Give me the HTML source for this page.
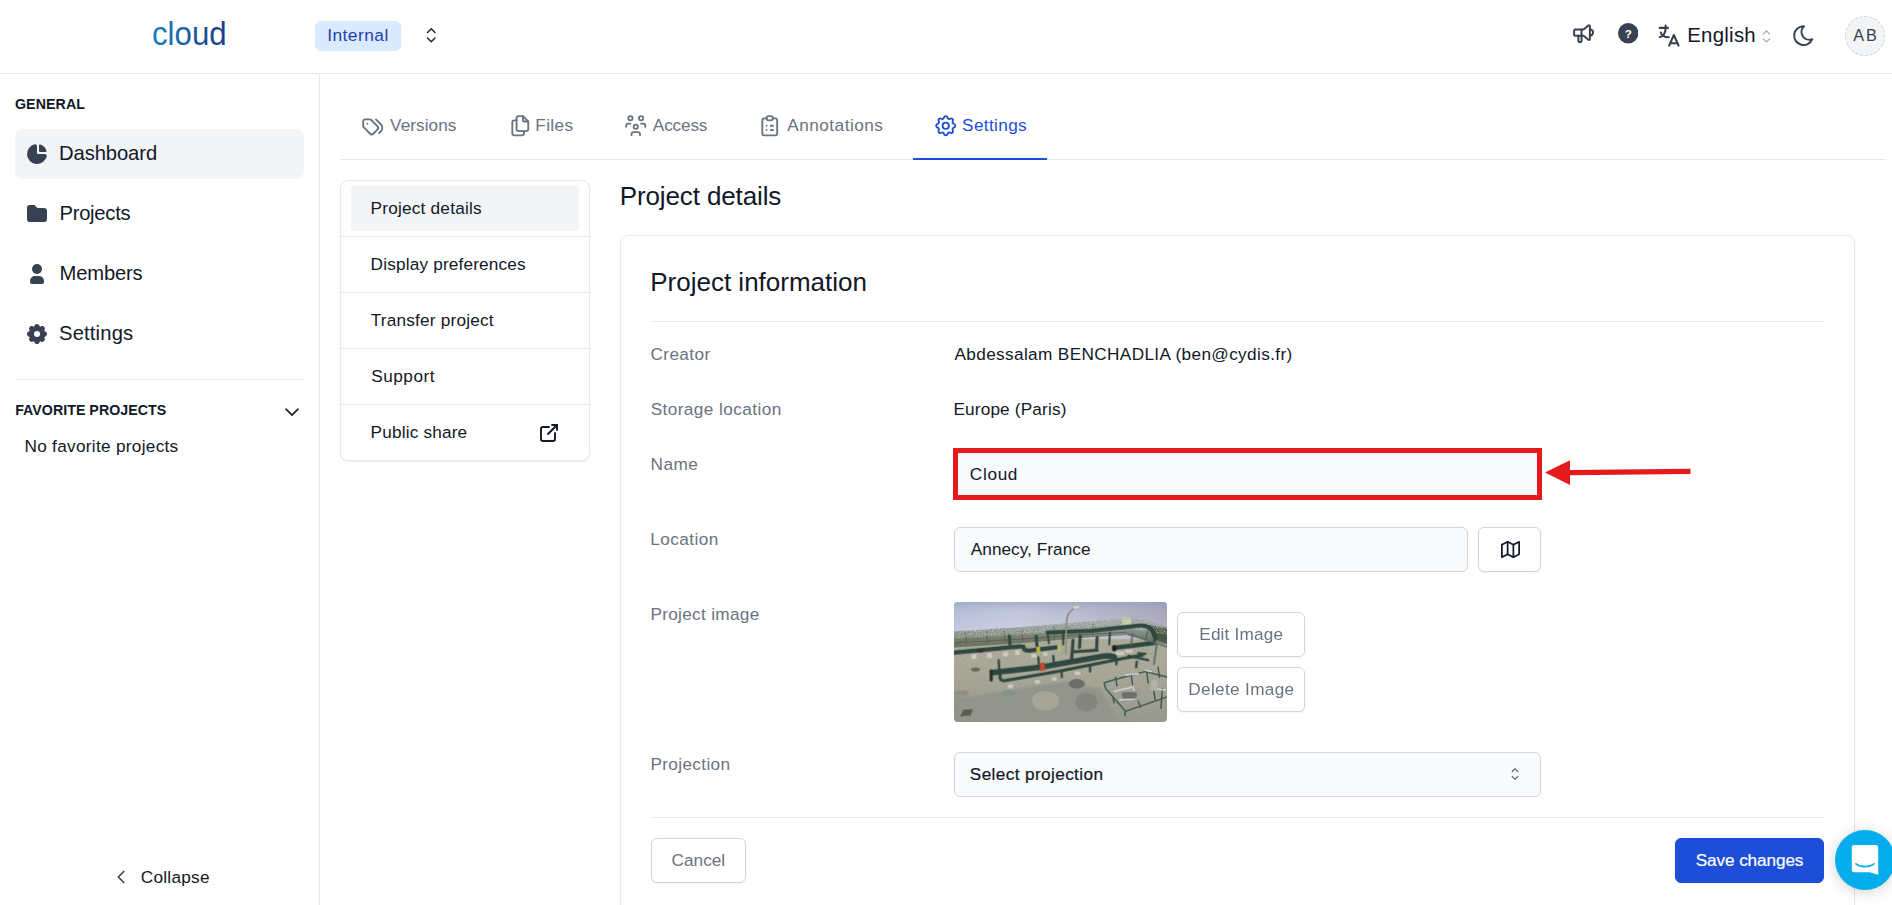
<!DOCTYPE html>
<html lang="en">
<head>
<meta charset="utf-8">
<title>Cloud - Project settings</title>
<style>
*{box-sizing:border-box;margin:0;padding:0}
html,body{width:1892px;height:905px;overflow:hidden;background:#fff}
body{font-family:"Liberation Sans",sans-serif;color:#111827;position:relative;-webkit-font-smoothing:antialiased}
.abs{position:absolute}
.t{position:absolute;white-space:nowrap;line-height:1}
svg{display:block}
/* header */
#header{position:absolute;left:0;top:0;width:1892px;height:74px;border-bottom:1px solid #e5e7eb;background:#fff}
/* sidebar */
#sidebar{position:absolute;left:0;top:74px;width:320px;height:831px;border-right:1px solid #e5e7eb;background:#fff}
.nav{position:absolute;left:15px;width:289px;height:50px;border-radius:8px}
.nav.active{background:#f3f4f6}
.nav .ic{position:absolute;left:10px;top:13px;width:24px;height:24px}
.nav .lb{position:absolute;left:44px;top:13px;font-size:20.2px;line-height:22px;color:#111827;white-space:nowrap}
.sec{font-size:14.2px;font-weight:700;color:#111827;letter-spacing:0}
/* tabs */
.tl{top:114px;line-height:22px;color:#6b7280;font-size:17.2px}
.tab{position:absolute;top:114px;height:24px;font-size:17.2px;line-height:22px;color:#6b7280;white-space:nowrap}
.tab svg{position:absolute;top:1px}
/* side menu */
#smenu{position:absolute;left:340px;top:180px;width:250px;height:281px;border:1px solid #e5e7eb;border-radius:8px;background:#fff;box-shadow:0 1px 2px rgba(0,0,0,.08)}
#smenu .it{position:absolute;left:0;width:248px;height:56px;border-top:1px solid #e5e7eb}
#smenu .it:first-child{border-top:none}
#smenu .it>span{position:absolute;left:30px;top:16px;font-size:17.2px;line-height:22px;color:#111827;white-space:nowrap}
/* card */
#card{position:absolute;left:620px;top:235px;width:1235px;height:700px;border:1px solid #e5e7eb;border-radius:8px;background:#fff;box-shadow:0 1px 2px rgba(0,0,0,.05)}
.lbl{position:absolute;left:651px;font-size:17.2px;line-height:22px;color:#6b7280;white-space:nowrap}
.val{position:absolute;left:954px;font-size:17.2px;line-height:22px;color:#111827;white-space:nowrap}
.inp{position:absolute;background:#f9fafb;border:1px solid #d1d5db;border-radius:6px;height:45px}
.inp>span{position:absolute;left:15px;top:10px;font-size:17.2px;line-height:22px;color:#111827;white-space:nowrap}
.btn{position:absolute;background:#fff;border:1px solid #d1d5db;border-radius:6px;height:45px;font-size:17.2px;line-height:43px;color:#6b7280;text-align:center;white-space:nowrap;box-shadow:0 1px 2px rgba(0,0,0,.05)}
.hr{position:absolute;height:1px;background:#e5e7eb}
/*TUNE*/
#x_internal{letter-spacing:0.435px;position:relative;left:-0.31px}
#x_english{letter-spacing:0.28px;position:relative;left:-1.36px}
#x_ab{letter-spacing:2.075px;position:relative;left:-0.14px}
#x_general{letter-spacing:0.102px;position:relative;left:-0.06px}
#x_dash{letter-spacing:-0.079px;position:relative;left:0.02px}
#x_proj{letter-spacing:-0.264px;position:relative;left:0.51px}
#x_memb{letter-spacing:-0.157px;position:relative;left:0.51px}
#x_sett{letter-spacing:0.158px;position:relative;left:0.09px}
#x_fav{letter-spacing:0.044px;position:relative;left:0.15px}
#x_nofav{letter-spacing:0.299px;position:relative;left:-0.55px}
#x_coll{letter-spacing:0.265px;position:relative;left:-0.28px}
#x_tver{letter-spacing:0.044px;position:relative;left:0.1px}
#x_tfil{letter-spacing:0.348px;position:relative;left:-0.69px}
#x_tacc{letter-spacing:-0.156px;position:relative;left:-0.16px}
#x_tann{letter-spacing:0.484px;position:relative;left:0.26px}
#x_tset{letter-spacing:0.35px;position:relative;left:0.12px}
#x_m1{letter-spacing:0.215px;position:relative;left:-0.4px}
#x_m2{letter-spacing:0.176px;position:relative;left:-0.4px}
#x_m3{letter-spacing:0.216px;position:relative;left:-0.36px}
#x_m4{letter-spacing:0.544px;position:relative;left:0.16px}
#x_m5{letter-spacing:0.178px;position:relative;left:-0.4px}
#x_h1{letter-spacing:-0.117px;position:relative;left:-0.3px}
#x_h2{letter-spacing:0.004px;position:relative;left:-0.83px}
#x_l0{letter-spacing:0.401px;position:relative;left:-0.55px}
#x_l1{letter-spacing:0.429px;position:relative;left:-0.39px}
#x_l2{letter-spacing:0.509px;position:relative;left:-0.47px}
#x_l3{letter-spacing:0.44px;position:relative;left:-0.7px}
#x_l4{letter-spacing:0.314px;position:relative;left:-0.58px}
#x_l5{letter-spacing:0.357px;position:relative;left:-0.58px}
#x_v0{letter-spacing:0.362px;position:relative;left:0.52px}
#x_v1{letter-spacing:0.164px;position:relative;left:-0.59px}
#x_i0{letter-spacing:0.665px;position:relative;left:-0.15px}
#x_i1{letter-spacing:0.048px;position:relative;left:0.78px}
#x_i2{letter-spacing:0.378px;position:relative;left:-0.18px}
#x_b0{letter-spacing:0.172px;position:relative;left:0.21px}
#x_b1{letter-spacing:0.329px;position:relative;left:0.36px}
#x_b2{letter-spacing:0.028px;position:relative;left:-0.12px}
#x_b3{letter-spacing:-0.113px;position:relative;left:0.05px}
/*ENDTUNE*/
</style>
</head>
<body>

<!-- HEADER -->
<div id="header">
  <svg class="abs" style="left:150px;top:12px" width="90" height="44" viewBox="0 0 90 44">
    <defs><linearGradient id="lg" x1="0" x2="1" y1="0" y2="0"><stop offset="0" stop-color="#1681be"/><stop offset="1" stop-color="#1b3a86"/></linearGradient></defs>
    <text x="2" y="32.5" font-family="Liberation Sans, sans-serif" font-size="32.5" fill="url(#lg)" textLength="74.6" lengthAdjust="spacingAndGlyphs">cloud</text>
  </svg>
  <div class="abs" style="left:315px;top:21px;width:86px;height:30px;border-radius:6px;background:#dbeafe"></div>
  <div class="t" style="left:327.5px;top:27px;font-size:17.4px;color:#1e40af"><span id="x_internal">Internal</span></div>
  <svg class="abs" style="left:420.05px;top:24.15px" width="22.5" height="22.5" viewBox="0 0 24 24" fill="none" stroke="#1f2937" stroke-width="1.6" stroke-linecap="round" stroke-linejoin="round"><path d="M8 9l4 -4l4 4"/><path d="M16 15l-4 4l-4 -4"/></svg>

  <svg class="abs" style="left:1570.8px;top:20.7px" width="25.2" height="25.2" viewBox="0 0 24 24" fill="none" stroke="#374151" stroke-width="1.9" stroke-linecap="round" stroke-linejoin="round"><path d="M18 8a3 3 0 0 1 0 6"/><path d="M10 8v11a1 1 0 0 1 -1 1h-1a1 1 0 0 1 -1 -1v-5"/><path d="M12 8h0l4.524 -3.770a.900 .900 0 0 1 1.476 .692v12.156a.900 .900 0 0 1 -1.476 .692l-4.524 -3.770h-8a1 1 0 0 1 -1 -1v-4a1 1 0 0 1 1 -1h8"/></svg>
  <svg class="abs" style="left:1617.7px;top:23.2px" width="20.4" height="20.4" viewBox="0 0 22 22"><circle cx="11" cy="11" r="11" fill="#374151"/><text x="11" y="16.300" text-anchor="middle" font-family="Liberation Sans, sans-serif" font-weight="700" font-size="12.500" fill="#fff">?</text></svg>
  <svg class="abs" style="left:1654.7px;top:21.9px" width="28.3" height="28.3" viewBox="0 0 24 24" fill="none" stroke="#374151" stroke-width="1.75" stroke-linecap="round" stroke-linejoin="round"><path d="M4 5h7"/><path d="M9 3v2c0 4.418 -2.239 8 -5 8"/><path d="M5 9c0 2.144 2.952 3.908 6.700 4"/><path d="M12 20l4 -9l4 9"/><path d="M19.100 18h-6.200"/></svg>
  <div class="t" style="left:1688.5px;top:25.3px;font-size:20.4px;color:#111827"><span id="x_english">English</span></div>
  <svg class="abs" style="left:1756.9px;top:26.9px" width="18.9" height="18.9" viewBox="0 0 24 24" fill="none" stroke="#9ca3af" stroke-width="1.5" stroke-linecap="round" stroke-linejoin="round"><path d="M8 9l4 -4l4 4"/><path d="M16 15l-4 4l-4 -4"/></svg>
  <svg class="abs" style="left:1790.8px;top:22.7px" width="25.2" height="25.2" viewBox="0 0 24 24" fill="none" stroke="#374151" stroke-width="1.9" stroke-linecap="round" stroke-linejoin="round"><path d="M12 3c.132 0 .263 0 .393 0a7.500 7.500 0 0 0 7.920 12.446a9 9 0 1 1 -8.313 -12.454z"/></svg>
  <div class="abs" style="left:1845px;top:16px;width:40px;height:40px;border-radius:50%;background:#f3f4f6;border:1px dashed #cdd1d8"></div>
  <div class="t" style="left:1853.3px;top:26.7px;font-size:16.3px;color:#374151"><span id="x_ab">AB</span></div>
</div>

<!-- SIDEBAR -->
<div id="sidebar"></div>
<div class="t sec" style="left:15px;top:97px"><span id="x_general">GENERAL</span></div>

<div class="nav active" style="top:129px">
  <svg class="ic" viewBox="0 0 24 24" fill="#374151"><path d="M9.883 2.207a1.900 1.900 0 0 1 2.087 1.522l.025 .167l.005 .104v7a1 1 0 0 0 .883 .993l.117 .007h6.800a2 2 0 0 1 2 2a1 1 0 0 1 -.026 .226a10 10 0 1 1 -12.270 -11.933l.270 -.067l.109 -.019z"/><path d="M14 3.500v5.500a1 1 0 0 0 1 1h5.500a1 1 0 0 0 .943 -1.332a10 10 0 0 0 -6.110 -6.111a1 1 0 0 0 -1.333 .943z"/></svg>
  <div class="lb"><span id="x_dash">Dashboard</span></div>
</div>
<div class="nav" style="top:189px">
  <svg class="ic" viewBox="0 0 24 24" fill="#374151"><path d="M9 3a1 1 0 0 1 .608 .206l.100 .087l2.706 2.707h6.586a3 3 0 0 1 2.995 2.824l.005 .176v8a3 3 0 0 1 -2.824 2.995l-.176 .005h-14a3 3 0 0 1 -2.995 -2.824l-.005 -.176v-11a3 3 0 0 1 2.824 -2.995l.176 -.005h4z"/></svg>
  <div class="lb"><span id="x_proj">Projects</span></div>
</div>
<div class="nav" style="top:249px">
  <svg class="ic" viewBox="0 0 24 24" fill="#374151"><path d="M12 2a5 5 0 1 1 -5 5l.005 -.217a5 5 0 0 1 4.995 -4.783z"/><path d="M14 14a5 5 0 0 1 5 5v1a2 2 0 0 1 -2 2h-10a2 2 0 0 1 -2 -2v-1a5 5 0 0 1 5 -5h4z"/></svg>
  <div class="lb"><span id="x_memb">Members</span></div>
</div>
<div class="nav" style="top:309px">
  <svg class="ic" viewBox="0 0 24 24" fill="#374151"><path d="M14.647 4.081a.724 .724 0 0 0 1.080 .448c2.439 -1.485 5.230 1.305 3.745 3.744a.724 .724 0 0 0 .447 1.080c2.775 .673 2.775 4.620 0 5.294a.724 .724 0 0 0 -.448 1.080c1.485 2.439 -1.305 5.230 -3.744 3.745a.724 .724 0 0 0 -1.080 .447c-.673 2.775 -4.620 2.775 -5.294 0a.724 .724 0 0 0 -1.080 -.448c-2.439 1.485 -5.230 -1.305 -3.745 -3.744a.724 .724 0 0 0 -.447 -1.080c-2.775 -.673 -2.775 -4.620 0 -5.294a.724 .724 0 0 0 .448 -1.080c-1.485 -2.439 1.305 -5.230 3.744 -3.745a.722 .722 0 0 0 1.080 -.447c.673 -2.775 4.620 -2.775 5.294 0zm-2.647 4.919a3 3 0 1 0 0 6a3 3 0 0 0 0 -6z"/></svg>
  <div class="lb"><span id="x_sett">Settings</span></div>
</div>

<div class="hr" style="left:15px;top:379px;width:289px"></div>
<div class="t sec" style="left:15px;top:403px"><span id="x_fav">FAVORITE PROJECTS</span></div>
<svg class="abs" style="left:282px;top:402px" width="20" height="20" viewBox="0 0 20 20" fill="none" stroke="#1f2937" stroke-width="1.800" stroke-linecap="round" stroke-linejoin="round"><path d="M4 7.200l6 6 6-6"/></svg>
<div class="t" style="left:25px;top:438.1px;font-size:17.2px;color:#111827"><span id="x_nofav">No favorite projects</span></div>

<svg class="abs" style="left:109.600px;top:866.400px" width="22" height="22" viewBox="0 0 24 24" fill="none" stroke="#374151" stroke-width="1.800" stroke-linecap="round" stroke-linejoin="round"><path d="M15 6l-6 6l6 6"/></svg>
<div class="t" style="left:141px;top:868.85px;font-size:17.2px;color:#111827"><span id="x_coll">Collapse</span></div>

<!-- TABS -->
<div class="hr" style="left:340px;top:159px;width:1545px"></div>
<div class="abs" style="left:913px;top:158px;width:134px;height:2px;background:#1d4ed8"></div>

<svg class="abs" style="left:360px;top:113px" width="25.5" height="25.5" viewBox="0 0 24 24" fill="none" stroke="#6b7280" stroke-width="1.75" stroke-linecap="round" stroke-linejoin="round"><path d="M3 8v4.172a2 2 0 0 0 .586 1.414l5.710 5.710a2.410 2.410 0 0 0 3.408 0l3.592 -3.592a2.410 2.410 0 0 0 0 -3.408l-5.710 -5.710a2 2 0 0 0 -1.414 -.586h-4.172a2 2 0 0 0 -2 2z"/><path d="M18 19l1.592 -1.592a4.820 4.820 0 0 0 0 -6.816l-4.592 -4.592"/><path d="M7 10h-.010"/></svg>
<div class="t tl" style="left:390px"><span id="x_tver">Versions</span></div>
<svg class="abs" style="left:507px;top:113px" width="25.5" height="25.5" viewBox="0 0 24 24" fill="none" stroke="#6b7280" stroke-width="1.75" stroke-linecap="round" stroke-linejoin="round"><path d="M15 3v4a1 1 0 0 0 1 1h4"/><path d="M18 17h-7a2 2 0 0 1 -2 -2v-10a2 2 0 0 1 2 -2h4l5 5v7a2 2 0 0 1 -2 2z"/><path d="M16 17v2a2 2 0 0 1 -2 2h-7a2 2 0 0 1 -2 -2v-10a2 2 0 0 1 2 -2h2"/></svg>
<div class="t tl" style="left:536px"><span id="x_tfil">Files</span></div>
<svg class="abs" style="left:622.7px;top:113px" width="25.5" height="25.5" viewBox="0 0 24 24" fill="none" stroke="#6b7280" stroke-width="1.75" stroke-linecap="round" stroke-linejoin="round"><path d="M10 13a2 2 0 1 0 4 0a2 2 0 0 0 -4 0"/><path d="M8 21v-1a2 2 0 0 1 2 -2h4a2 2 0 0 1 2 2v1"/><path d="M15 5a2 2 0 1 0 4 0a2 2 0 0 0 -4 0"/><path d="M17 10h2a2 2 0 0 1 2 2v1"/><path d="M5 5a2 2 0 1 0 4 0a2 2 0 0 0 -4 0"/><path d="M3 13v-1a2 2 0 0 1 2 -2h2"/></svg>
<div class="t tl" style="left:653px"><span id="x_tacc">Access</span></div>
<svg class="abs" style="left:757px;top:113px" width="25.5" height="25.5" viewBox="0 0 24 24" fill="none" stroke="#6b7280" stroke-width="1.75" stroke-linecap="round" stroke-linejoin="round"><path d="M9 5h-2a2 2 0 0 0 -2 2v12a2 2 0 0 0 2 2h10a2 2 0 0 0 2 -2v-12a2 2 0 0 0 -2 -2h-2"/><path d="M9 5a2 2 0 0 1 2 -2h2a2 2 0 0 1 2 2v0a2 2 0 0 1 -2 2h-2a2 2 0 0 1 -2 -2z"/><path d="M9 12l.010 0"/><path d="M13 12l2 0"/><path d="M9 16l.010 0"/><path d="M13 16l2 0"/></svg>
<div class="t tl" style="left:787px"><span id="x_tann">Annotations</span></div>
<svg class="abs" style="left:933px;top:113px" width="25.5" height="25.5" viewBox="0 0 24 24" fill="none" stroke="#1d4ed8" stroke-width="1.75" stroke-linecap="round" stroke-linejoin="round"><path d="M10.325 4.317c.426 -1.756 2.924 -1.756 3.350 0a1.724 1.724 0 0 0 2.573 1.066c1.543 -.940 3.310 .826 2.370 2.370a1.724 1.724 0 0 0 1.065 2.572c1.756 .426 1.756 2.924 0 3.350a1.724 1.724 0 0 0 -1.066 2.573c.940 1.543 -.826 3.310 -2.370 2.370a1.724 1.724 0 0 0 -2.572 1.065c-.426 1.756 -2.924 1.756 -3.350 0a1.724 1.724 0 0 0 -2.573 -1.066c-1.543 .940 -3.310 -.826 -2.370 -2.370a1.724 1.724 0 0 0 -1.065 -2.572c-1.756 -.426 -1.756 -2.924 0 -3.350a1.724 1.724 0 0 0 1.066 -2.573c-.940 -1.543 .826 -3.310 2.370 -2.370c1 .608 2.296 .070 2.572 -1.065z"/><path d="M9 12a3 3 0 1 0 6 0a3 3 0 0 0 -6 0"/></svg>
<div class="t tl" style="left:962px;color:#1d4ed8"><span id="x_tset">Settings</span></div>

<!-- SIDE MENU -->
<div id="smenu">
  <div class="it" style="top:0"><div class="abs" style="left:10px;top:5px;width:228px;height:45px;border-radius:4px;background:#f3f4f6"></div><span style="top:16px"><span id="x_m1" class="i">Project details</span></span></div>
  <div class="it" style="top:55px"><span><span id="x_m2" class="i">Display preferences</span></span></div>
  <div class="it" style="top:111px"><span><span id="x_m3" class="i">Transfer project</span></span></div>
  <div class="it" style="top:167px"><span><span id="x_m4" class="i">Support</span></span></div>
  <div class="it" style="top:223px"><span><span id="x_m5" class="i">Public share</span></span>
    <svg class="abs" style="left:195.5px;top:16px" width="24" height="24" viewBox="0 0 24 24" fill="none" stroke="#111827" stroke-width="1.9" stroke-linecap="round" stroke-linejoin="round"><path d="M12 6h-6a2 2 0 0 0 -2 2v10a2 2 0 0 0 2 2h10a2 2 0 0 0 2 -2v-6"/><path d="M11 13l9 -9"/><path d="M15 4h5v5"/></svg>
  </div>
</div>

<!-- MAIN -->
<div class="t" style="left:620px;top:183px;font-size:26px;color:#111827"><span id="x_h1">Project details</span></div>
<div id="card"></div>
<div class="t" style="left:651px;top:269px;font-size:26px;color:#111827"><span id="x_h2">Project information</span></div>
<div class="hr" style="left:651px;top:321px;width:1173px"></div>

<div class="lbl" style="top:343px"><span id="x_l0">Creator</span></div>
<div class="val" style="top:343px"><span id="x_v0">Abdessalam BENCHADLIA (ben@cydis.fr)</span></div>
<div class="lbl" style="top:398px"><span id="x_l1">Storage location</span></div>
<div class="val" style="top:398px"><span id="x_v1">Europe (Paris)</span></div>

<div class="lbl" style="top:453px"><span id="x_l2">Name</span></div>
<div class="inp" style="left:954px;top:452px;width:587px"><span><span id="x_i0" class="i">Cloud</span></span></div>
<div class="abs" style="left:952.5px;top:448px;width:589.7px;height:51.9px;border:5px solid #e41a1d"></div>
<svg class="abs" style="left:1543px;top:455.5px" width="152" height="34" viewBox="0 0 152 34"><path d="M147.500 15.300 26 16.600" stroke="#e41a1d" stroke-width="5.200" fill="none"/><path d="M2 16.600 27 4.300v24.600z" fill="#e41a1d"/></svg>

<div class="lbl" style="top:528px"><span id="x_l3">Location</span></div>
<div class="inp" style="left:954px;top:527px;width:514px"><span><span id="x_i1" class="i">Annecy, France</span></span></div>
<div class="btn" style="left:1478px;top:527px;width:63px">
  <svg class="abs" style="left:19.5px;top:10px" width="23" height="23" viewBox="0 0 24 24" fill="none" stroke="#111827" stroke-width="1.8" stroke-linecap="round" stroke-linejoin="round"><path d="M3 7l6 -3l6 3l6 -3v13l-6 3l-6 -3l-6 3v-13"/><path d="M9 4v13"/><path d="M15 7v13"/></svg>
</div>

<div class="lbl" style="top:603px"><span id="x_l4">Project image</span></div>
<svg id="pimg" class="abs" style="left:954px;top:602px;border-radius:4px" width="213" height="120" viewBox="30 30 1503 846" preserveAspectRatio="none">
  <defs>
    <linearGradient id="sky" x1="0" x2="1" y1="0" y2="0"><stop offset="0" stop-color="#bcc5de"/><stop offset=".3" stop-color="#cbd0e3"/><stop offset=".6" stop-color="#bfbed0"/><stop offset="1" stop-color="#a9a2b5"/></linearGradient>
    <linearGradient id="skyv" x1="0" x2="0" y1="0" y2="1"><stop offset="0" stop-color="#8f9ab8" stop-opacity=".6"/><stop offset=".3" stop-color="#a9b1cb" stop-opacity=".25"/><stop offset=".9" stop-color="#d6d9e6" stop-opacity=".35"/></linearGradient>
    <linearGradient id="gnd" x1="0" x2="0" y1="0" y2="1"><stop offset="0" stop-color="#b3b19f"/><stop offset=".55" stop-color="#adab9a"/><stop offset="1" stop-color="#999a8f"/></linearGradient>
    <filter id="bl" x="-5%" y="-5%" width="110%" height="110%"><feGaussianBlur stdDeviation="3.5"/></filter>
    <filter id="bl2" x="-5%" y="-5%" width="110%" height="110%"><feGaussianBlur stdDeviation="7"/></filter>
    <filter id="nz" x="0" y="0" width="100%" height="100%"><feTurbulence type="fractalNoise" baseFrequency=".09" numOctaves="2" seed="4" result="n"/><feColorMatrix type="matrix" values="0 0 0 0 .25  0 0 0 0 .27  0 0 0 0 .24  .9 .9 .9 0 -1.05"/></filter>
    <filter id="nz2" x="0" y="0" width="100%" height="100%"><feTurbulence type="fractalNoise" baseFrequency=".12" numOctaves="2" seed="9" result="n"/><feColorMatrix type="matrix" values="0 0 0 0 .85  0 0 0 0 .87  0 0 0 0 .86  1.2 1.2 1.2 0 -1.45"/></filter>
  </defs>
  <rect x="30" y="30" width="1503" height="846" fill="url(#gnd)"/>
  <!-- concrete lower zone -->
  <path filter="url(#bl2)" d="M30 690 L140 700 L420 650 L820 590 L1060 640 L1180 860 L1533 900 L30 900z" fill="#93968c"/>
  <!-- sky -->
  <rect x="30" y="30" width="1503" height="260" fill="url(#sky)"/>
  <rect x="30" y="30" width="1503" height="260" fill="url(#skyv)"/>
  <!-- fence + vegetation band -->
  <linearGradient id="fg" x1="0" x2="0" y1="0" y2="1"><stop offset="0" stop-color="#9aa3a4"/><stop offset=".45" stop-color="#858f87"/><stop offset=".75" stop-color="#6f7964"/><stop offset="1" stop-color="#66705a"/></linearGradient>
  <clipPath id="fc"><path d="M30 236 C300 222 700 192 1000 166 C1150 154 1260 146 1330 150 C1420 165 1480 190 1533 205 L1533 262 L1250 215 L900 232 C600 250 300 272 30 290z"/></clipPath>
  <g filter="url(#bl)">
    <path d="M30 236 C300 222 700 192 1000 166 C1150 154 1260 146 1330 150 C1420 165 1480 190 1533 205 L1533 330 L1250 262 L900 285 L500 320 L30 350z" fill="url(#fg)"/>
    <path d="M30 318 L500 292 L900 262 L1250 243" stroke="#5d4f40" stroke-width="7" fill="none" opacity=".7"/>
    <path d="M1220 140 q30 -25 55 5 q20 40 -10 60 l-50 -10z" fill="#b9c3a0"/>
    <path d="M1390 190 L1533 215 L1533 320 L1440 290z" fill="#46573f"/>
    <path d="M110 240 L118 330 M260 232 L266 322 M385 226 L390 316 M510 218 L515 310 M735 200 L738 300 M1010 176 L1012 270" stroke="#4b5650" stroke-width="7" fill="none" opacity=".75"/>
  </g>
  <rect x="30" y="140" width="1503" height="170" fill="#fff" filter="url(#nz2)" opacity=".5" clip-path="url(#fc)"/>
  <!-- ground texture -->
  <rect x="30" y="300" width="1503" height="576" filter="url(#nz)" opacity=".35"/>
  <!-- ground marks -->
  <g filter="url(#bl)">
    <ellipse cx="676" cy="726" rx="97" ry="70" fill="#a5a697"/>
    <ellipse cx="897" cy="606" rx="56" ry="34" fill="#6c6e66"/>
    <ellipse cx="965" cy="735" rx="78" ry="66" fill="#7f837c" opacity=".8"/>
    <ellipse cx="182" cy="506" rx="32" ry="14" fill="#6d654f"/>
    <path d="M95 790 L162 785 L150 828 L72 838z" fill="#5c5b50"/>
    <path d="M30 660 L120 652 L135 690 L30 686z" fill="#8f9082"/>
    <ellipse cx="410" cy="672" rx="45" ry="22" fill="#7c9488" opacity=".7"/>
  </g>
  <!-- supports -->
  <g fill="#c9cbc4" filter="url(#bl)">
    <rect x="152" y="398" width="36" height="34"/><rect x="262" y="390" width="36" height="34"/><rect x="375" y="382" width="36" height="32"/><rect x="462" y="372" width="34" height="30"/>
    <rect x="575" y="395" width="34" height="28"/><rect x="660" y="385" width="30" height="24"/>
    <rect x="410" y="610" width="36" height="28"/><rect x="600" y="580" width="36" height="26"/><rect x="720" y="560" width="34" height="24"/><rect x="880" y="520" width="40" height="24"/>
    <rect x="1170" y="380" width="60" height="24"/><rect x="1240" y="365" width="50" height="22"/>
  </g>
  <!-- pipes -->
  <g fill="none" stroke="#2e463f" stroke-linecap="round" stroke-linejoin="round" filter="url(#bl)">
    <path d="M30 386 L500 342" stroke-width="30"/>
    <path d="M520 345 q0 30 40 28 L750 350" stroke-width="30"/>
    <path d="M690 245 L1000 232 L1340 196 q100 -5 110 95" stroke-width="28"/>
    <path d="M1130 245 L1125 330 M800 250 L800 330 M690 250 L700 320" stroke-width="14"/>
    <path d="M1165 352 L1440 318" stroke-width="32"/>
    <path d="M1260 255 L1533 345 M1290 250 L1280 330 M1460 330 L1440 470 M1400 230 L1380 300" stroke-width="12" stroke="#566a62"/>
    <path d="M300 528 L640 490 L1080 412 q40 -8 80 5" stroke-width="40"/>
    <path d="M355 545 q-8 40 30 40 L760 520 L1240 424 l120 -20" stroke-width="22"/>
    <path d="M292 515 L292 580" stroke-width="22" stroke="#22302c"/>
    <path d="M870 300 L860 430 M920 270 L915 350 M1040 280 L1035 370 M880 380 L1040 370 M610 270 L615 340 M420 270 L425 330" stroke-width="22"/>
    <path d="M345 440 L350 520 M625 420 L630 480 M730 410 L735 470 M790 520 L790 560 M990 480 L990 520 M1180 430 L1175 470 M1320 450 L1315 490 M1260 410 L1400 440 M1330 390 L1380 395" stroke-width="16"/>
  </g>
  <g filter="url(#bl)">
    <path d="M633 462 L668 456 L672 510 L640 518z" fill="#c4492d"/>
    <path d="M610 348 L636 346 L638 388 L614 390z" fill="#c9b93a"/>
    <path d="M760 340 L775 338 L778 372 L764 374z" fill="#c5d63f"/>
    <ellipse cx="218" cy="372" rx="26" ry="14" fill="#3b3230"/>
    <ellipse cx="1160" cy="355" rx="16" ry="22" fill="#241f22"/>
  </g>
  <!-- lamp post -->
  <g filter="url(#bl)" fill="none" stroke-linecap="round">
    <path d="M818 392 L824 170 Q830 95 885 72" stroke="#8b907f" stroke-width="12"/>
    <path d="M880 70 L905 64" stroke="#d8d8c8" stroke-width="16"/>
  </g>
  <!-- right-bottom rack -->
  <g filter="url(#bl)" fill="none" stroke-linecap="round" stroke-linejoin="round">
    <path d="M1090 600 L1170 575 L1380 520 L1533 560 M1090 600 L1100 640 L1240 800 L1533 700 M1240 800 L1235 830 M1150 700 L1160 740 M1330 730 L1345 770" stroke="#48625a" stroke-width="12"/>
    <path d="M1170 560 L1180 620 M1280 540 L1290 610 M1390 520 L1400 600 M1470 490 L1480 560 M1500 640 L1490 780 M1440 660 L1450 720" stroke="#3f574d" stroke-width="10"/>
    <path d="M1160 660 L1290 630 L1300 650 M1200 720 L1300 715 M1420 640 L1520 650 M1240 545 L1330 535 M1380 510 L1420 520" stroke="#c9cccb" stroke-width="12"/>
    <path d="M1420 590 q40 -30 50 20 l-10 40 l-45 5z" fill="#aeb3a8" stroke="none"/>
    <path d="M1210 670 q50 -10 110 0 q10 30 -20 40 l-80 0z" fill="#6d7268" stroke="none"/>
  </g>
</svg>
<div class="btn" style="left:1177px;top:612px;width:128px"><span id="x_b0">Edit Image</span></div>
<div class="btn" style="left:1177px;top:667px;width:128px"><span id="x_b1">Delete Image</span></div>

<div class="lbl" style="top:753px"><span id="x_l5">Projection</span></div>
<div class="inp" style="left:954px;top:752px;width:587px"><span style="-webkit-text-stroke:.2px #111827"><span id="x_i2" class="i">Select projection</span></span>
  <svg class="abs" style="left:553px;top:11.700px" width="14" height="18" viewBox="0 0 14 18" fill="none" stroke="#6b7280" stroke-width="1.300" stroke-linecap="round" stroke-linejoin="round"><path d="M4.200 6.500 7 3.700l2.800 2.800M4.200 11.500 7 14.300l2.800-2.800"/></svg>
</div>

<div class="hr" style="left:651px;top:817px;width:1173px"></div>
<div class="btn" style="left:651px;top:838px;width:95px"><span id="x_b2">Cancel</span></div>
<div class="btn" style="left:1675px;top:838px;width:149px;background:#1d4ed8;border-color:#1d4ed8;color:#fff;-webkit-text-stroke:.2px #fff"><span id="x_b3">Save changes</span></div>

<!-- chat bubble -->
<div class="abs" style="left:1835px;top:830px;width:60px;height:60px;border-radius:50%;background:#05adec;box-shadow:0 2px 14px rgba(0,0,0,.18)"></div>
<svg class="abs" style="left:1850px;top:843px" width="30" height="34" viewBox="0 0 30 34"><path d="M4.3 1.9h21.400a2.500 2.500 0 0 1 2.500 2.500v27.400l-8.500-2.600H4.300a2.500 2.500 0 0 1-2.500-2.500V4.400a2.500 2.500 0 0 1 2.500-2.500z" fill="#fff"/><path d="M6 20.800c5 3.800 13 3.800 18 0" fill="none" stroke="#05adec" stroke-width="1.600" stroke-linecap="round"/></svg>

</body>
</html>
